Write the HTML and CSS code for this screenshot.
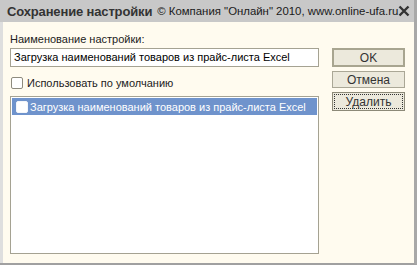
FILE: index.html
```html
<!DOCTYPE html>
<html>
<head>
<meta charset="utf-8">
<link rel="stylesheet" href="styles.css">
</head>
<body>
<div class="window">
  <div class="titlebar">
    <b class="title-main">Сохранение настройки</b>
    <span class="title-sub">© Компания "Онлайн" 2010, www.online-ufa.ru</span>
    <svg class="close" width="12" height="12" viewBox="0 0 12 12"><path d="M1.5 1.5 L10.5 10.5 M10.5 1.5 L1.5 10.5" stroke="#333" stroke-width="2.4"/></svg>
  </div>
  <div class="body">
    <div class="main">
      <div class="label">Наименование настройки:</div>
      <div class="input">Загрузка наименований товаров из прайс-листа Excel</div>
      <div class="check-row"><span class="checkbox"></span><span>Использовать по умолчанию</span></div>
      <div class="list">
        <div class="row selected"><span class="checkbox white"></span><span>Загрузка наименований товаров из прайс-листа Excel</span></div>
      </div>
    </div>
    <div class="buttons">
      <div class="btn default">OK</div>
      <div class="btn">Отмена</div>
      <div class="btn focus"><span>Удалить</span></div>
    </div>
  </div>
</div>
</body>
</html>
```
FILE: styles.css
```css
html, body {
  margin: 0;
  padding: 0;
  background: #fffbef;
}
.window {
  width: 417px;
  height: 265px;
  box-sizing: border-box;
  display: flex;
  flex-direction: column;
  font-family: "Liberation Sans", Arial, sans-serif;
  font-size: 11px;
  color: #222;
  background: #fffbef;
  border-bottom: 2px solid #a0a0a0;
  border-right: 3px solid #a8a8a8;
}
.titlebar {
  height: 22px;
  background: #c8c8c8;
  display: flex;
  align-items: center;
  padding-left: 7px;
  padding-right: 4px;
  flex-shrink: 0;
  white-space: nowrap;
}
.title-main {
  font-size: 13px;
  letter-spacing: -0.15px;
  color: #333;
}
.title-sub {
  margin-left: 5px;
  font-size: 11.4px;
  color: #1a1a1a;
}
.close {
  margin-left: auto;
  flex-shrink: 0;
}
.body {
  flex: 1;
  display: flex;
  border-left: 3px solid #dedede;
  padding: 11px 0 9px 7px;
}
.main {
  width: 309px;
  display: flex;
  flex-direction: column;
}
.label {
  height: 13px;
  line-height: 13px;
}
.input {
  margin-top: 2px;
  height: 17px;
  line-height: 17px;
  border: 1px solid #a5a292;
  background: #fff;
  padding-left: 3px;
  white-space: nowrap;
  color: #000;
}
.check-row {
  margin-top: 9px;
  display: flex;
  align-items: center;
  height: 13px;
}
.checkbox {
  width: 10px;
  height: 10px;
  border: 1px solid #8e8b7e;
  border-radius: 2px;
  background: #fff;
  margin-left: 1px;
  margin-right: 4px;
}
.list {
  margin-top: 7px;
  flex: 1;
  border: 1px solid #a5a292;
  background: #fff;
  padding: 1px;
}
.row {
  height: 17px;
  display: flex;
  align-items: center;
  white-space: nowrap;
}
.row.selected {
  background: #6f93cc;
  color: #fff;
}
.checkbox.white {
  border-color: #f4f6fa;
  margin-left: 4px;
  margin-right: 2px;
}
.buttons {
  margin-left: 13px;
  margin-top: 15px;
  width: 73px;
  display: flex;
  flex-direction: column;
  gap: 4px;
  font-size: 12px;
}
.btn {
  height: 17px;
  box-sizing: border-box;
  border: 1px solid #aaa796;
  background: #ece9dc;
  display: flex;
  align-items: center;
  justify-content: center;
  color: #333;
}
.btn.default {
  height: 19px;
  border: 2px solid #a8a590;
}
.btn.focus {
  height: 19px;
  border: 1px solid #8c8978;
  padding: 1px;
}
.btn.focus span {
  flex: 1;
  align-self: stretch;
  display: flex;
  align-items: center;
  justify-content: center;
  border: 1px dotted #333;
}
```
